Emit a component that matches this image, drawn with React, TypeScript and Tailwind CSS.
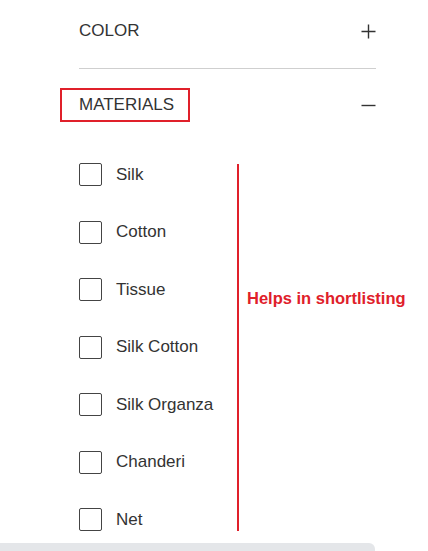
import React from "react";

const items = ["Silk", "Cotton", "Tissue", "Silk Cotton", "Silk Organza", "Chanderi", "Net"];

export default function App() {
  return (
    <div className="relative w-[428px] h-[551px] bg-white overflow-hidden text-[#333]" style={{ fontFamily: '"Liberation Sans", Arial, sans-serif' }}>
      <div className="pl-[79px] w-[376px]">
        <div className="mt-[21px] h-[20px] flex items-center justify-between text-[17px] leading-[20px]">
          <span>COLOR</span>
          <svg width="15" height="15" viewBox="0 0 15 15">
            <path d="M7.5 0.5v14M0.5 7.5h14" stroke="#333" strokeWidth="1.4" fill="none" />
          </svg>
        </div>
        <div className="mt-[27px] h-px bg-[#cfcfcf]" />
        <div className="mt-[19px] flex items-center justify-between">
          <div className="ml-[-19px] w-[130px] h-[34px] border-2 border-[#e0202a] pl-[17px] flex items-center text-[17px] leading-[20px]">
            MATERIALS
          </div>
          <svg width="15" height="15" viewBox="0 0 15 15">
            <path d="M0.5 7.5h14" stroke="#333" strokeWidth="1.4" fill="none" />
          </svg>
        </div>
        <div className="mt-[41px] flex">
          <div className="w-[158px] shrink-0 flex flex-col gap-[34.5px]">
            {items.map((t) => (
              <div key={t} className="h-[23px] flex items-center">
                <div className="w-[23px] h-[23px] shrink-0 border border-[#444] rounded-[2px] bg-white" />
                <span className="ml-[14px] text-[17px] leading-[20px] whitespace-nowrap">{t}</span>
              </div>
            ))}
          </div>
          <div className="mt-[1px] shrink-0 w-[2px] h-[367px] bg-[#e0202a]" />
          <div className="ml-[8px] shrink-0 mt-[124px] text-[16.5px] leading-[22px] font-bold text-[#e0202a] whitespace-nowrap">
            Helps in shortlisting
          </div>
        </div>
      </div>
      <div className="absolute left-0 top-[543px] w-[375px] h-[12px] bg-[#e4e6e9] rounded-tr-[6px]" />
    </div>
  );
}
